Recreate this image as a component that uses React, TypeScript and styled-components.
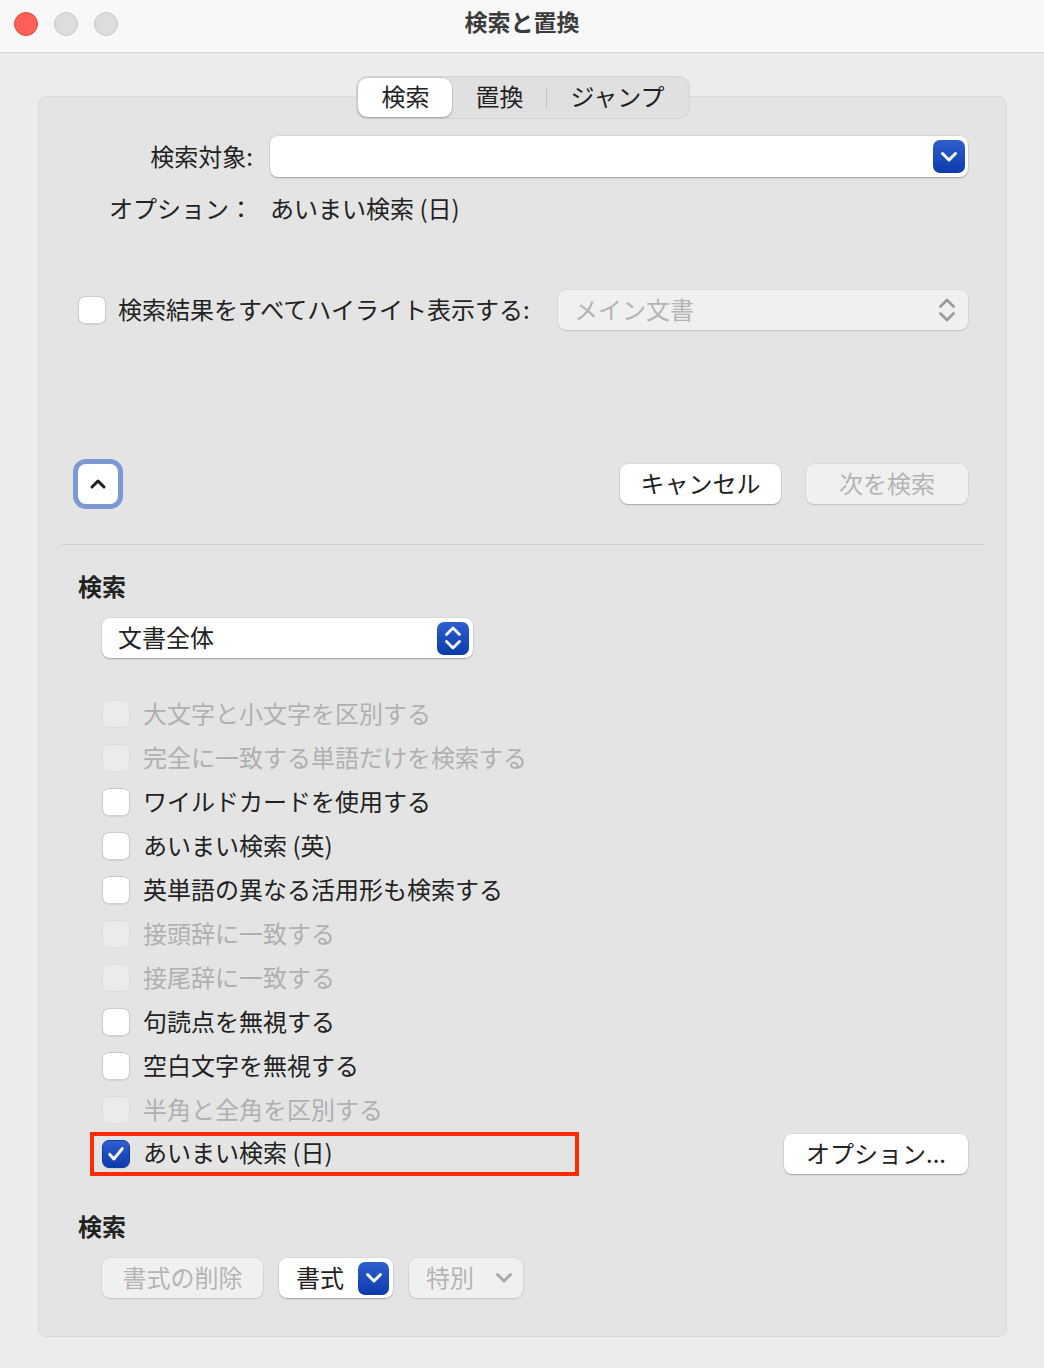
import React from 'react';
import styled, { createGlobalStyle, css } from 'styled-components';

const GlobalStyle = createGlobalStyle`
  html, body {
    margin: 0;
    padding: 0;
    background: #ececec;
  }
  body {
    font-family: "Noto Sans CJK JP", "Noto Sans", sans-serif;
    color: #222;
    -webkit-font-smoothing: antialiased;
  }
  * {
    box-sizing: border-box;
  }
`;

const blueFill = css`
  background: linear-gradient(180deg, #2f5fcf 0%, #0c3aab 100%);
  color: #fff;
`;

const ChevronDown = () => (
  <svg width="18" height="12" viewBox="0 0 18 12" fill="none" stroke="currentColor" strokeWidth="3" strokeLinecap="round" strokeLinejoin="round">
    <path d="M2.5 2.5l6.5 6.5 6.5-6.5" />
  </svg>
);

const ChevronUp = () => (
  <svg width="18" height="12" viewBox="0 0 18 12" fill="none" stroke="currentColor" strokeWidth="3" strokeLinecap="round" strokeLinejoin="round">
    <path d="M3 9l6-6 6 6" />
  </svg>
);

const UpDown = () => (
  <svg width="18" height="28" viewBox="0 0 18 28" fill="none" stroke="currentColor" strokeWidth="2.8" strokeLinecap="round" strokeLinejoin="round">
    <path d="M2.5 10.5L9 4l6.5 6.5" />
    <path d="M2.5 17.5L9 24l6.5-6.5" />
  </svg>
);

const Check = () => (
  <svg width="20" height="20" viewBox="0 0 24 24" fill="none" stroke="#fff" strokeWidth="3.6" strokeLinecap="round" strokeLinejoin="round">
    <path d="M4.5 12.5l5 5.5L19.5 5.5" />
  </svg>
);

const Window = styled.div`
  width: 1044px;
  height: 1368px;
  display: flex;
  flex-direction: column;
  background: #ececec;
  overflow: hidden;
`;

const TitleBar = styled.header`
  height: 53px;
  flex: none;
  display: grid;
  grid-template-columns: 1fr auto 1fr;
  align-items: center;
  padding-bottom: 5px;
  background: #f8f8f8;
  border-bottom: 1px solid #d3d3d3;
`;

const Lights = styled.div`
  display: flex;
  gap: 16px;
  padding-left: 14px;
`;

const Light = styled.span<{ $red?: boolean }>`
  width: 24px;
  height: 24px;
  border-radius: 50%;
  background: ${(p) => (p.$red ? '#fe5f57' : '#dddddd')};
  border: 1px solid ${(p) => (p.$red ? '#e2463f' : '#c9c9c9')};
`;

const Title = styled.h1`
  margin: 0 0 6px;
  font-size: 23px;
  font-weight: 700;
  color: #3c3c3c;
  line-height: 30px;
`;

const Body = styled.main`
  flex: 1;
  display: flex;
  flex-direction: column;
  padding: 43px 37px 31px 38px;
`;

const Panel = styled.section`
  flex: 1;
  display: flex;
  flex-direction: column;
  background: #e4e4e4;
  border: 1px solid #d9d9d9;
  border-radius: 9px;
  padding: 0 38px 0 39px;
`;

const Tabs = styled.div`
  align-self: center;
  margin-top: -21px;
  height: 43px;
  display: flex;
  align-items: center;
  padding: 0 1px;
  background: #e0e0e0;
  border: 1px solid #d4d4d4;
  border-radius: 11px;
`;

const Tab = styled.div<{ $active?: boolean }>`
  height: 39px;
  padding: 0 23px 4px;
  display: flex;
  align-items: center;
  font-size: 24px;
  color: #222;
  border-radius: 9px;
  ${(p) =>
    p.$active &&
    css`
      background: #fff;
      box-shadow: 0 1px 2px rgba(0, 0, 0, 0.25), 0 0 0 0.5px rgba(0, 0, 0, 0.12);
    `}
`;

const TabDivider = styled.span`
  width: 1px;
  height: 22px;
  background: #c6c6c6;
`;

const FormRow = styled.div<{ $top: number }>`
  display: flex;
  align-items: center;
  gap: 17px;
  margin-top: ${(p) => p.$top}px;
`;

const FieldLabel = styled.label`
  width: 175px;
  flex: none;
  text-align: right;
  font-size: 24px;
  line-height: 28px;
  padding-bottom: 2px;
  white-space: nowrap;
`;

const Value = styled.span`
  font-size: 24px;
  line-height: 28px;
  padding-bottom: 2px;
`;

const ComboBox = styled.div`
  flex: 1;
  height: 41px;
  display: flex;
  align-items: center;
  justify-content: flex-end;
  padding-right: 3px;
  background: #fff;
  border-radius: 8px;
  box-shadow: 0 1px 1.5px rgba(0, 0, 0, 0.25), 0 0 0 0.5px rgba(0, 0, 0, 0.1);
`;

const BlueKnob = styled.span<{ $w?: number }>`
  ${blueFill};
  width: ${(p) => p.$w ?? 32}px;
  height: 33px;
  border-radius: 7px;
  display: flex;
  align-items: center;
  justify-content: center;
  flex: none;
`;

const HighlightRow = styled.div`
  display: flex;
  align-items: center;
  margin-top: 66px;
  height: 40px;
`;

const Box = styled.span<{ $disabled?: boolean; $checked?: boolean }>`
  width: 28px;
  height: 28px;
  flex: none;
  border-radius: 7px;
  display: flex;
  align-items: center;
  justify-content: center;
  background: #fff;
  border: 1px solid #cdcdcd;
  box-shadow: 0 0.5px 1px rgba(0, 0, 0, 0.08);
  ${(p) =>
    p.$disabled &&
    css`
      background: #ebebeb;
      border-color: #dcdcdc;
      box-shadow: none;
    `}
  ${(p) =>
    p.$checked &&
    css`
      ${blueFill};
      border-color: #0c3aab;
    `}
`;

const CheckText = styled.span<{ $disabled?: boolean; $gap?: number }>`
  font-size: 24px;
  line-height: 28px;
  padding-bottom: 3px;
  white-space: nowrap;
  margin-left: ${(p) => p.$gap ?? 0}px;
  color: ${(p) => (p.$disabled ? '#b0b0b0' : '#222')};
`;

const Popup = styled.div<{ $w: number; $disabled?: boolean }>`
  width: ${(p) => p.$w}px;
  height: 40px;
  flex: none;
  display: flex;
  align-items: center;
  justify-content: space-between;
  padding: 0 4px 0 16px;
  border-radius: 8px;
  font-size: 24px;
  background: ${(p) => (p.$disabled ? '#f0f0f0' : '#fff')};
  color: ${(p) => (p.$disabled ? '#b4b4b4' : '#222')};
  box-shadow: 0 1px 1.5px rgba(0, 0, 0, ${(p) => (p.$disabled ? 0.12 : 0.25)}),
    0 0 0 0.5px rgba(0, 0, 0, 0.08);

  & > span:first-child {
    padding-bottom: 4px;
  }
`;

const GrayArrows = styled.span`
  color: #9a9a9a;
  display: flex;
  padding-right: 8px;
`;

const ButtonRow = styled.div`
  display: flex;
  align-items: center;
  gap: 25px;
  margin-top: 134px;
  height: 40px;
`;

const Button = styled.button<{ $w: number; $disabled?: boolean }>`
  width: ${(p) => p.$w}px;
  height: 40px;
  flex: none;
  display: flex;
  align-items: center;
  justify-content: center;
  border: none;
  border-radius: 8px;
  font-family: inherit;
  font-size: 24px;
  padding: 0 0 4px;
  background: ${(p) => (p.$disabled ? '#f0f0f0' : '#fff')};
  color: ${(p) => (p.$disabled ? '#b4b4b4' : '#222')};
  box-shadow: 0 1px 1.5px rgba(0, 0, 0, ${(p) => (p.$disabled ? 0.12 : 0.25)}),
    0 0 0 0.5px rgba(0, 0, 0, 0.08);
`;

const DisclosureButton = styled.button`
  width: 40px;
  height: 40px;
  flex: none;
  margin-right: auto;
  padding: 0;
  border: none;
  border-radius: 8px;
  background: #fff;
  color: #1e1e1e;
  display: flex;
  align-items: center;
  justify-content: center;
  box-shadow: 0 0 0 5px #7c99d4;
`;

const Divider = styled.hr`
  margin: 40px -17px 0 -16px;
  border: none;
  height: 1px;
  background: #cdcdcd;
`;

const SectionTitle = styled.h2<{ $top: number }>`
  margin: ${(p) => p.$top}px 0 0;
  font-size: 24px;
  font-weight: 700;
  line-height: 28px;
  padding-bottom: 2px;
  color: #222;
`;

const SelectWrap = styled.div`
  margin: 16px 0 0 24px;
`;

const CheckList = styled.ul`
  list-style: none;
  margin: 34px 0 0;
  padding: 0 0 0 24px;
`;

const CheckRow = styled.li`
  height: 44px;
  display: flex;
  align-items: center;
  gap: 13px;
`;

const Marked = styled.div`
  width: 489px;
  height: 44px;
  margin: -1px 0 0 -12px;
  padding-left: 8px;
  display: flex;
  align-items: center;
  gap: 13px;
  border: 4px solid #ff2a00;
`;

const Spacer = styled.span`
  flex: 1;
`;

const FormatRow = styled.div`
  display: flex;
  align-items: center;
  gap: 16px;
  margin: 16px 0 0 24px;
`;

const SplitButton = styled.div<{ $disabled?: boolean }>`
  width: 114px;
  height: 40px;
  display: flex;
  align-items: center;
  justify-content: space-between;
  padding: 0 4px 0 17px;
  border-radius: 8px;
  font-size: 24px;
  background: ${(p) => (p.$disabled ? '#f0f0f0' : '#fff')};
  color: ${(p) => (p.$disabled ? '#b4b4b4' : '#222')};
  box-shadow: 0 1px 1.5px rgba(0, 0, 0, ${(p) => (p.$disabled ? 0.12 : 0.25)}),
    0 0 0 0.5px rgba(0, 0, 0, 0.08);

  & > span:first-child {
    padding-bottom: 4px;
  }
`;

const GrayChevron = styled.span`
  color: #a8a8a8;
  display: flex;
  padding-right: 6px;
`;

const options: { label: string; disabled?: boolean }[] = [
  { label: '大文字と小文字を区別する', disabled: true },
  { label: '完全に一致する単語だけを検索する', disabled: true },
  { label: 'ワイルドカードを使用する' },
  { label: 'あいまい検索 (英)' },
  { label: '英単語の異なる活用形も検索する' },
  { label: '接頭辞に一致する', disabled: true },
  { label: '接尾辞に一致する', disabled: true },
  { label: '句読点を無視する' },
  { label: '空白文字を無視する' },
  { label: '半角と全角を区別する', disabled: true },
];

export default function App() {
  return (
    <Window>
      <GlobalStyle />
      <TitleBar>
        <Lights>
          <Light $red />
          <Light />
          <Light />
        </Lights>
        <Title>検索と置換</Title>
        <span />
      </TitleBar>

      <Body>
        <Panel>
          <Tabs>
            <Tab $active>検索</Tab>
            <Tab>置換</Tab>
            <TabDivider />
            <Tab>ジャンプ</Tab>
          </Tabs>

          <FormRow $top={17}>
            <FieldLabel>検索対象:</FieldLabel>
            <ComboBox>
              <BlueKnob>
                <ChevronDown />
              </BlueKnob>
            </ComboBox>
          </FormRow>

          <FormRow $top={17}>
            <FieldLabel>オプション：</FieldLabel>
            <Value>あいまい検索 (日)</Value>
          </FormRow>

          <HighlightRow>
            <Box />
            <CheckText $gap={12}>検索結果をすべてハイライト表示する:</CheckText>
            <Spacer />
            <Popup $w={410} $disabled>
              <span>メイン文書</span>
              <GrayArrows>
                <UpDown />
              </GrayArrows>
            </Popup>
          </HighlightRow>

          <ButtonRow>
            <DisclosureButton>
              <ChevronUp />
            </DisclosureButton>
            <Button $w={161}>キャンセル</Button>
            <Button $w={162} $disabled>
              次を検索
            </Button>
          </ButtonRow>

          <Divider />

          <SectionTitle $top={27}>検索</SectionTitle>
          <SelectWrap>
            <Popup $w={371}>
              <span>文書全体</span>
              <BlueKnob>
                <UpDown />
              </BlueKnob>
            </Popup>
          </SelectWrap>

          <CheckList>
            {options.map((o) => (
              <CheckRow key={o.label}>
                <Box $disabled={o.disabled} />
                <CheckText $disabled={o.disabled}>{o.label}</CheckText>
              </CheckRow>
            ))}
            <CheckRow>
              <Marked>
                <Box $checked>
                  <Check />
                </Box>
                <CheckText>あいまい検索 (日)</CheckText>
              </Marked>
              <Spacer />
              <Button $w={184}>オプション...</Button>
            </CheckRow>
          </CheckList>

          <SectionTitle $top={36}>検索</SectionTitle>
          <FormatRow>
            <Button $w={161} $disabled>
              書式の削除
            </Button>
            <SplitButton>
              <span>書式</span>
              <BlueKnob $w={31}>
                <ChevronDown />
              </BlueKnob>
            </SplitButton>
            <SplitButton $disabled>
              <span>特別</span>
              <GrayChevron>
                <ChevronDown />
              </GrayChevron>
            </SplitButton>
          </FormatRow>
        </Panel>
      </Body>
    </Window>
  );
}
